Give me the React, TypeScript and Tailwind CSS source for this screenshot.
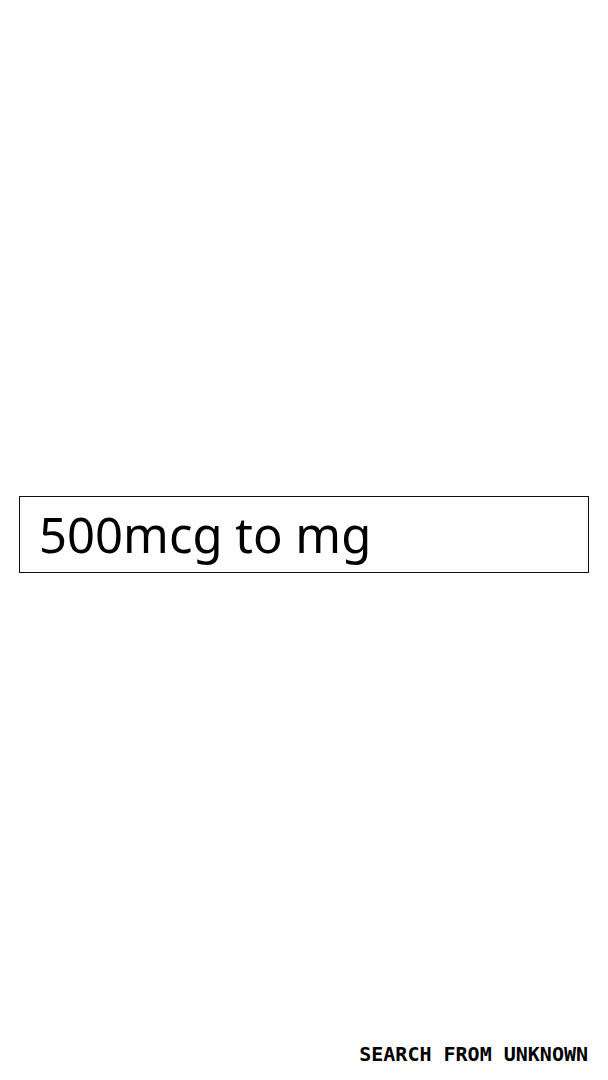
import React from 'react';

export default function App() {
  return (
    <div className="h-screen w-full bg-white flex flex-col">
      <main className="flex-1 flex items-center px-[19px] pt-[26px]">
        <div className="w-full h-[77px] border border-[#111] flex items-center pl-[19px]">
          <span className="text-[49px] leading-none text-black font-['Noto_Sans',sans-serif]">
            500mcg to mg
          </span>
        </div>
      </main>
      <footer className="px-[20px] pb-[14px] h-[38px] flex items-center justify-end">
        <span className="text-[20px] font-bold text-black font-['DejaVu_Sans_Mono',monospace]">
          SEARCH FROM UNKNOWN
        </span>
      </footer>
    </div>
  );
}
